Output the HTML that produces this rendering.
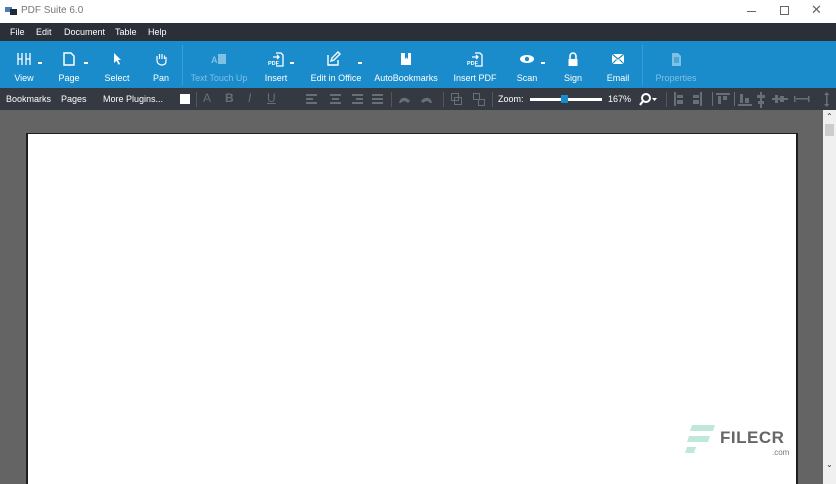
<!DOCTYPE html>
<html><head><style>
*{margin:0;padding:0;box-sizing:border-box}
body{width:836px;height:484px;overflow:hidden;background:#646464;font-family:"Liberation Sans",sans-serif;position:relative}
.a{position:absolute}
.lbl{position:absolute;top:73px;font-size:9px;color:#fff;transform:translateX(-50%);white-space:nowrap}
.ic{position:absolute;top:51px;transform:translateX(-50%);width:16px;height:16px}
.dis{color:#7fc0e4}
.fb{position:absolute;top:94px;font-size:9px;color:#fff;white-space:nowrap}
.g{position:absolute;background:#6a6f77}
.dd{position:absolute;top:62px;width:4px;height:2px;background:#fff}
</style></head><body>
<!-- title bar -->
<div class="a" style="left:0;top:0;width:836px;height:23px;background:#fff"></div>
<div class="a" style="left:5px;top:7px;width:7px;height:5px;background:#4a7bb7"></div>
<div class="a" style="left:10px;top:9px;width:7px;height:6px;background:#1f2b3c"></div>
<div class="a" style="left:21px;top:5px;font-size:10px;color:#777">PDF Suite 6.0</div>
<div class="a" style="left:747px;top:11px;width:9px;height:1px;background:#666"></div>
<div class="a" style="left:780px;top:6px;width:9px;height:9px;border:1px solid #666"></div>
<div class="a" style="left:811px;top:2px;font-size:13px;color:#666">✕</div>
<!-- menu -->
<div class="a" style="left:0;top:23px;width:836px;height:18px;background:#2b3038"></div>
<div class="a" style="left:10px;top:27px;font-size:9px;color:#fff;word-spacing:0">File</div>
<div class="a" style="left:36px;top:27px;font-size:9px;color:#fff">Edit</div>
<div class="a" style="left:64px;top:27px;font-size:9px;color:#fff">Document</div>
<div class="a" style="left:115px;top:27px;font-size:9px;color:#fff">Table</div>
<div class="a" style="left:148px;top:27px;font-size:9px;color:#fff">Help</div>
<!-- toolbar -->
<div class="a" style="left:0;top:41px;width:836px;height:47px;background:#1a8ccb"></div>
<div class="a" style="left:182px;top:45px;width:1px;height:40px;background:#3a9dd3"></div>
<div class="a" style="left:642px;top:45px;width:1px;height:40px;background:#3a9dd3"></div>
<svg class="ic" style="left:24px" viewBox="0 0 16 16" fill="none" stroke="#fff" stroke-width="1.3"><path d="M2 2v12M6 2v12M10 2v12M14 2v12M2 8h4M10 8h4"/></svg>
<div class="dd" style="left:38px"></div>
<svg class="ic" style="left:69px" viewBox="0 0 16 16" fill="none" stroke="#fff" stroke-width="1.5"><path d="M3 2h7l3 3v9H3z"/></svg>
<div class="dd" style="left:84px"></div>
<svg class="ic" style="left:117px" viewBox="0 0 16 16" fill="#fff"><path d="M5 2l7 7h-3l2 4-1.5.7-2-4L5 12z"/></svg>
<svg class="ic" style="left:161px" viewBox="0 0 16 16" fill="none" stroke="#fff" stroke-width="1.2"><path d="M4 9V5M6.5 8V3M9 8V3M11.5 8V4.5M4 9c0 3 2 5 5 5s4-2 4-4V6"/></svg>
<svg class="ic" style="left:219px" viewBox="0 0 16 16"><text x="0" y="12" font-size="9" fill="#7fc0e4" font-family="Liberation Sans" font-weight="bold">A</text><rect x="7" y="3" width="8" height="10" fill="#7fc0e4"/></svg>
<svg class="ic" style="left:276px" viewBox="0 0 16 16"><path d="M8 2h5l2 2v11H8" fill="none" stroke="#fff" stroke-width="1.3"/><path d="M5 6h6M9 4l2 2-2 2" stroke="#fff" stroke-width="1.3" fill="none"/><text x="0" y="14" font-size="5.5" fill="#fff" font-weight="bold" font-family="Liberation Sans">PDF</text></svg>
<div class="dd" style="left:290px"></div>
<svg class="ic" style="left:333px" viewBox="0 0 16 16" fill="none" stroke="#fff" stroke-width="1.4"><path d="M3 4v10h10V9M6 10l1-3 6-6 2 2-6 6z"/></svg>
<div class="dd" style="left:358px"></div>
<svg class="ic" style="left:406px" viewBox="0 0 16 16"><path d="M3 2h10v12H3z" fill="#fff"/><path d="M7 2v6l1.5-1.5L10 8V2" fill="#1a8ccb"/></svg>
<svg class="ic" style="left:475px" viewBox="0 0 16 16"><path d="M8 2h5l2 2v11H8" fill="none" stroke="#fff" stroke-width="1.3"/><path d="M5 6h6M9 4l2 2-2 2" stroke="#fff" stroke-width="1.3" fill="none"/><text x="0" y="14" font-size="5.5" fill="#fff" font-weight="bold" font-family="Liberation Sans">PDF</text></svg>
<svg class="ic" style="left:527px" viewBox="0 0 16 16"><ellipse cx="8" cy="8" rx="7" ry="4" fill="#fff"/><circle cx="8" cy="8" r="2.2" fill="#1a8ccb"/></svg>
<div class="dd" style="left:541px"></div>
<svg class="ic" style="left:573px" viewBox="0 0 16 16"><path d="M5 8V5a3 3 0 016 0v3" fill="none" stroke="#fff" stroke-width="1.6"/><rect x="3.5" y="8" width="9" height="7" fill="#fff"/></svg>
<svg class="ic" style="left:618px" viewBox="0 0 16 16"><rect x="2" y="3" width="12" height="10" fill="#fff"/><path d="M2 3l6 5 6-5M2 13l4.5-4.5M14 13l-4.5-4.5" stroke="#1a8ccb" stroke-width="1.2" fill="none"/></svg>
<svg class="ic" style="left:676px" viewBox="0 0 16 16"><path d="M4 2h6l3 3v10H4z" fill="#7fc0e4"/><path d="M6 7h5M6 9h5M6 11h5" stroke="#1a8ccb"/></svg>
<div class="lbl" style="left:24px">View</div>
<div class="lbl" style="left:69px">Page</div>
<div class="lbl" style="left:117px">Select</div>
<div class="lbl" style="left:161px">Pan</div>
<div class="lbl dis" style="left:219px">Text Touch Up</div>
<div class="lbl" style="left:276px">Insert</div>
<div class="lbl" style="left:336px">Edit in Office</div>
<div class="lbl" style="left:406px">AutoBookmarks</div>
<div class="lbl" style="left:475px">Insert PDF</div>
<div class="lbl" style="left:527px">Scan</div>
<div class="lbl" style="left:573px">Sign</div>
<div class="lbl" style="left:618px">Email</div>
<div class="lbl dis" style="left:676px">Properties</div>
<!-- format bar -->
<div class="a" style="left:0;top:88px;width:836px;height:22px;background:#353a42"></div>
<div class="fb" style="left:6px">Bookmarks</div>
<div class="fb" style="left:61px">Pages</div>
<div class="fb" style="left:103px">More Plugins...</div>
<div class="a" style="left:180px;top:94px;width:10px;height:10px;background:#fff"></div>
<div class="a" style="left:196px;top:92px;width:1px;height:15px;background:#555"></div>
<div class="a" style="left:203px;top:91px;font-size:12px;color:#6a6f77">A</div>
<div class="a" style="left:225px;top:91px;font-size:12px;color:#6a6f77;font-weight:bold">B</div>
<div class="a" style="left:248px;top:91px;font-size:12px;color:#6a6f77;font-style:italic">I</div>
<div class="a" style="left:267px;top:91px;font-size:12px;color:#6a6f77;text-decoration:underline">U</div>
<svg class="a" style="left:306px;top:93px" width="80" height="14" fill="#6a6f77"><g><rect x="0" y="1" width="11" height="2"/><rect x="0" y="5" width="7" height="2"/><rect x="0" y="9" width="11" height="2"/></g><g transform="translate(24)"><rect x="0" y="1" width="11" height="2"/><rect x="2" y="5" width="7" height="2"/><rect x="0" y="9" width="11" height="2"/></g><g transform="translate(46)"><rect x="0" y="1" width="11" height="2"/><rect x="4" y="5" width="7" height="2"/><rect x="0" y="9" width="11" height="2"/></g><g transform="translate(66)"><rect x="0" y="1" width="11" height="2"/><rect x="0" y="5" width="11" height="2"/><rect x="0" y="9" width="11" height="2"/></g></svg>
<div class="a" style="left:391px;top:92px;width:1px;height:15px;background:#555"></div>
<svg class="a" style="left:398px;top:93px" width="40" height="14" fill="#6a6f77"><path d="M1 10c1-6 7-7 11-2l-2 2c-3-3-6-2-7 0z"/><path d="M34 10c-1-6-7-7-11-2l2 2c3-3 6-2 7 0z"/></svg>
<div class="a" style="left:443px;top:92px;width:1px;height:15px;background:#555"></div>
<svg class="a" style="left:450px;top:92px" width="40" height="16" fill="none" stroke="#6a6f77"><rect x="1.5" y="1.5" width="7" height="7"/><rect x="4.5" y="5.5" width="7" height="7"/><rect x="23.5" y="1.5" width="6" height="6"/><rect x="28.5" y="7.5" width="6" height="6"/></svg>
<div class="a" style="left:492px;top:92px;width:1px;height:15px;background:#555"></div>
<div class="fb" style="left:498px">Zoom:</div>
<div class="a" style="left:530px;top:98px;width:72px;height:3px;background:#fff"></div>
<div class="a" style="left:561px;top:95px;width:7px;height:8px;background:#1a8ccb"></div>
<div class="fb" style="left:608px">167%</div>
<svg class="a" style="left:638px;top:92px" width="24" height="14"><circle cx="8" cy="6" r="4" fill="none" stroke="#fff" stroke-width="2"/><path d="M5 9l-3 4" stroke="#fff" stroke-width="2.2"/><path d="M14 6h5l-2.5 3z" fill="#fff"/></svg>
<div class="a" style="left:666px;top:92px;width:1px;height:15px;background:#555"></div>
<svg class="a" style="left:672px;top:91px" width="164" height="18" fill="#6a6f77"><rect x="2" y="1" width="2" height="14"/><rect x="5" y="4" width="6" height="3"/><rect x="5" y="9" width="6" height="4"/><rect x="28" y="1" width="2" height="14"/><rect x="21" y="4" width="6" height="3"/><rect x="21" y="9" width="6" height="4"/><rect x="40" y="1" width="1" height="14"/><rect x="44" y="2" width="14" height="2"/><rect x="46" y="5" width="3" height="8"/><rect x="51" y="5" width="4" height="4"/><rect x="62" y="1" width="1" height="14"/><rect x="66" y="13" width="14" height="2"/><rect x="68" y="3" width="3" height="9"/><rect x="73" y="7" width="4" height="5"/><rect x="88" y="1" width="2" height="16"/><rect x="85" y="4" width="8" height="3"/><rect x="86" y="10" width="6" height="3"/><rect x="100" y="7" width="16" height="2"/><rect x="103" y="4" width="3" height="8"/><rect x="108" y="5" width="4" height="6"/><rect x="124" y="7" width="12" height="1.5"/><rect x="122" y="5" width="1.5" height="6"/><rect x="136" y="5" width="1.5" height="6"/><rect x="154" y="2" width="1.5" height="13"/><path d="M152 4l2.7-3 2.7 3zM152 13l2.7 3 2.7-3z"/></svg>
<!-- canvas -->
<div class="a" style="left:26px;top:133px;width:772px;height:351px;background:#fff;border-left:2px solid #1e1e1e;border-top:1px solid #1e1e1e;border-right:2px solid #1e1e1e"></div>
<div class="a" style="left:823px;top:110px;width:13px;height:374px;background:#f0f0f0"></div>
<div class="a" style="left:825px;top:124px;width:9px;height:12px;background:#cdcdcd"></div>
<div class="a" style="left:826px;top:112px;font-size:8px;color:#333">⌃</div>
<div class="a" style="left:826px;top:460px;font-size:8px;color:#333">⌄</div>
<!-- watermark -->
<svg class="a" style="left:684px;top:424px" width="40" height="36" fill="#bfe7db"><path d="M8 1h23l-2 6H6z"/><path d="M5 12h21l-2 6H3z"/><path d="M3 23h9l-2 6H1z"/></svg>
<div class="a" style="left:720px;top:428px;font-size:17px;font-weight:bold;color:#666;letter-spacing:0.5px">FILECR</div>
<div class="a" style="left:772px;top:448px;font-size:8px;color:#777">.com</div>
</body></html>
